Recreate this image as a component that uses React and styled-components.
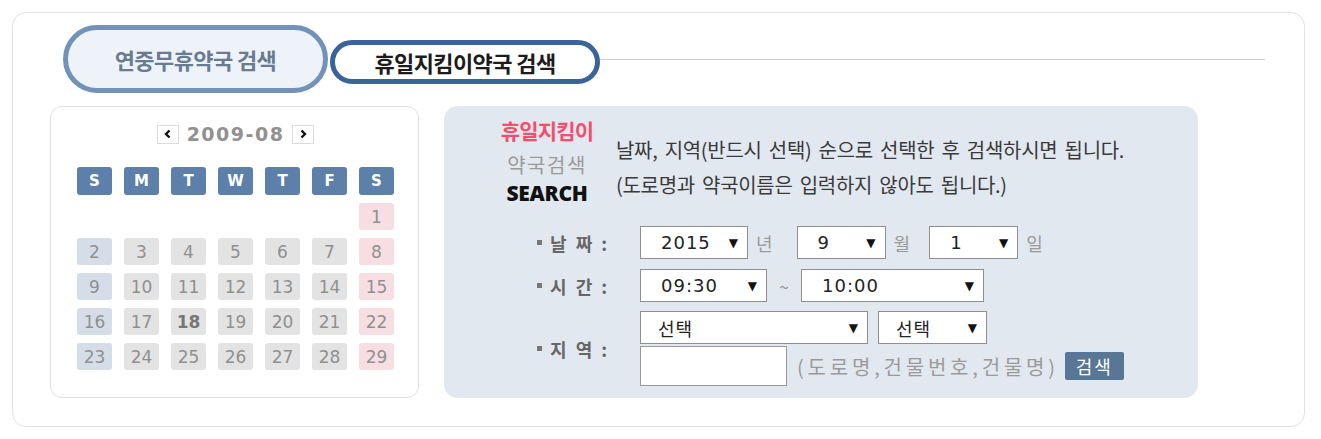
import styled, { createGlobalStyle } from 'styled-components';

const GlobalStyle = createGlobalStyle`
	body {
		margin: 0;
		background: #fff;
		font-family: "Noto Sans CJK KR", sans-serif;
	}
`;

const Card = styled.div`
	box-sizing: border-box;
	width: 1293px;
	height: 415px;
	margin: 12px 0 0 12px;
	padding: 12px 0 0 37px;
	border: 1px solid #dfe2e6;
	border-radius: 14px;
`;

const TabsRow = styled.div`
	display: flex;
	align-items: center;
	height: 68px;
	margin: 0 39px 0 13px;
`;

const Tab = styled.div`
	box-sizing: border-box;
	display: flex;
	align-items: center;
	justify-content: center;
	width: ${({ $active }) => ($active ? '270px' : '265px')};
	height: ${({ $active }) => ($active ? '44px' : '68px')};
	margin-top: ${({ $active }) => ($active ? '6px' : '0')};
	margin-left: ${({ $active }) => ($active ? '2px' : '0')};
	border: 5px solid ${({ $active }) => ($active ? '#3a6499' : '#7292b9')};
	border-radius: 34px;
	background: ${({ $active }) => ($active ? '#fff' : '#eef3f9')};
	color: ${({ $active }) => ($active ? '#1c1c1c' : '#687b92')};
	font-size: 22px;
	font-weight: ${({ $active }) => ($active ? 700 : 600)};
	letter-spacing: -0.6px;
`;

const TabLine = styled.div`
	flex: 1;
	height: 1px;
	background: #c9cdd4;
`;

const Body = styled.div`
	display: flex;
	gap: 25px;
	margin-top: 13px;
`;

const Calendar = styled.div`
	box-sizing: border-box;
	width: 369px;
	height: 292px;
	padding: 17px 0 0 26px;
	border: 1px solid #dde2e8;
	border-radius: 12px;
`;

const MonthNav = styled.div`
	display: flex;
	align-items: center;
	justify-content: center;
	gap: 8px;
	width: 317px;
	height: 20px;
	margin-bottom: 23px;
`;

const NavBtn = styled.div`
	box-sizing: border-box;
	display: flex;
	align-items: center;
	justify-content: center;
	width: 22px;
	height: 19px;
	border: 1px solid #dcdcdc;
	background: #fff;
`;

const MonthText = styled.span`
	font-family: "DejaVu Sans", sans-serif;
	font-size: 19px;
	font-weight: bold;
	letter-spacing: 1.5px;
	color: #919191;
`;

const Grid = styled.div`
	display: grid;
	grid-template-columns: repeat(7, 35px);
	grid-template-rows: 28px;
	grid-auto-rows: 27px;
	column-gap: 12px;
	row-gap: 8px;
`;

const DayHead = styled.div`
	display: flex;
	align-items: center;
	justify-content: center;
	border-radius: 3px;
	background: #5d80aa;
	color: #fff;
	font-family: "DejaVu Sans", sans-serif;
	font-size: 15px;
	font-weight: bold;
`;

const cellColors = { sun: '#d5dde9', sat: '#f6dee3', week: '#e3e3e3' };

const DateCell = styled.div`
	display: flex;
	align-items: center;
	justify-content: center;
	border-radius: 3px;
	background: ${({ $kind }) => cellColors[$kind]};
	color: ${({ $bold }) => ($bold ? '#777' : '#909090')};
	font-family: "DejaVu Sans", sans-serif;
	font-size: 17px;
	font-weight: ${({ $bold }) => ($bold ? 'bold' : 'normal')};
`;

const Panel = styled.div`
	box-sizing: border-box;
	width: 754px;
	height: 292px;
	padding: 9px 0 0 53px;
	border-radius: 14px;
	background: #e2e8f0;
`;

const Intro = styled.div`
	display: flex;
	gap: 19px;
`;

const Badge = styled.div`
	display: flex;
	flex-direction: column;
	align-items: center;
	width: 100px;
`;

const BadgeRed = styled.div`
	line-height: 30px;
	font-size: 21px;
	font-weight: 700;
	letter-spacing: -0.8px;
	color: #f24f6c;
`;

const BadgeGray = styled.div`
	margin-top: 5px;
	line-height: 30px;
	font-size: 20px;
	letter-spacing: 1.5px;
	color: #9a9a9a;
`;

const BadgeEn = styled.div`
	line-height: 26px;
	font-family: "Open Sans", sans-serif;
	font-size: 21px;
	font-weight: 800;
	letter-spacing: -0.3px;
	color: #111;
`;

const Desc = styled.div`
	margin-top: 17px;
	line-height: 35px;
	font-size: 20px;
	letter-spacing: -0.3px;
	word-spacing: 3px;
	color: #3a3a3a;
`;

const Form = styled.div`
	display: flex;
	flex-direction: column;
	margin: 20px 0 0 40px;
`;

const Row = styled.div`
	display: flex;
	align-items: center;
	margin-top: ${({ $gap }) => $gap || 0}px;
`;

const Label = styled.div`
	display: flex;
	align-items: center;
	width: 103px;
	flex-shrink: 0;
	font-size: 18px;
	font-weight: 700;
	letter-spacing: 2.5px;
	color: #666;
	&::before {
		content: '';
		width: 5px;
		height: 5px;
		margin-right: 8px;
		background: #777;
	}
`;

const Select = styled.div`
	box-sizing: border-box;
	display: flex;
	align-items: center;
	justify-content: space-between;
	width: ${({ $w }) => $w}px;
	height: 33px;
	padding: 0 8px 0 ${({ $pl }) => $pl || 20}px;
	border: 1px solid #8f8f8f;
	background: #fff;
	font-family: "DejaVu Sans", "Noto Sans CJK KR", sans-serif;
	font-size: 18px;
	letter-spacing: 1px;
	color: #222;
`;

const Arrow = styled.span`
	font-size: 12px;
	color: #111;
`;

const Unit = styled.span`
	margin: 0 ${({ $mr }) => $mr || 0}px 0 ${({ $ml }) => $ml || 8}px;
	font-size: 18px;
	color: #9a9a9a;
`;

const AreaGroup = styled.div`
	display: flex;
	flex-direction: column;
	gap: 2px;
`;

const TextInput = styled.div`
	box-sizing: border-box;
	width: 147px;
	height: 40px;
	border: 1px solid #999;
	background: #fff;
`;

const Hint = styled.span`
	margin-left: 10px;
	font-size: 20px;
	letter-spacing: 3.8px;
	color: #9a9a9a;
`;

const SearchBtn = styled.button`
	width: 59px;
	height: 28px;
	margin-left: 6px;
	padding: 0;
	border: none;
	border-radius: 2px;
	background: #587695;
	color: #fff;
	font-family: "Noto Sans CJK KR", sans-serif;
	font-size: 18px;
	letter-spacing: 2px;
`;

const Chevron = ({ dir }) => (
	<svg width="10" height="10" viewBox="0 0 10 10">
		<polyline
			points={dir === 'left' ? '6.5,1.5 3,5 6.5,8.5' : '3.5,1.5 7,5 3.5,8.5'}
			fill="none"
			stroke="#111"
			strokeWidth="2.4"
		/>
	</svg>
);

const days = ['S', 'M', 'T', 'W', 'T', 'F', 'S'];
const weeks = [
	[null, null, null, null, null, null, 1],
	[2, 3, 4, 5, 6, 7, 8],
	[9, 10, 11, 12, 13, 14, 15],
	[16, 17, 18, 19, 20, 21, 22],
	[23, 24, 25, 26, 27, 28, 29],
];

const kindOf = i => (i === 0 ? 'sun' : i === 6 ? 'sat' : 'week');

const Sel = ({ w, pl, children }) => (
	<Select $w={w} $pl={pl}>
		<span>{children}</span>
		<Arrow>▼</Arrow>
	</Select>
);

const App = () => {
	return (
		<>
			<GlobalStyle />
			<Card>
				<TabsRow>
					<Tab>연중무휴약국 검색</Tab>
					<Tab $active>휴일지킴이약국 검색</Tab>
					<TabLine />
				</TabsRow>
				<Body>
					<Calendar>
						<MonthNav>
							<NavBtn><Chevron dir="left" /></NavBtn>
							<MonthText>2009-08</MonthText>
							<NavBtn><Chevron dir="right" /></NavBtn>
						</MonthNav>
						<Grid>
							{days.map((d, i) => (
								<DayHead key={'h' + i}>{d}</DayHead>
							))}
							{weeks.map((week, wi) =>
								week.map((n, i) =>
									n ? (
										<DateCell key={wi + '-' + i} $kind={kindOf(i)} $bold={n === 18}>
											{n}
										</DateCell>
									) : (
										<div key={wi + '-' + i} />
									)
								)
							)}
						</Grid>
					</Calendar>
					<Panel>
						<Intro>
							<Badge>
								<BadgeRed>휴일지킴이</BadgeRed>
								<BadgeGray>약국검색</BadgeGray>
								<BadgeEn>SEARCH</BadgeEn>
							</Badge>
							<Desc>
								날짜, 지역(반드시 선택) 순으로 선택한 후 검색하시면 됩니다.
								<br />
								(도로명과 약국이름은 입력하지 않아도 됩니다.)
							</Desc>
						</Intro>
						<Form>
							<Row>
								<Label>날 짜 :</Label>
								<Sel w={108}>2015</Sel>
								<Unit $mr={24}>년</Unit>
								<Sel w={89}>9</Sel>
								<Unit $mr={19}>월</Unit>
								<Sel w={89}>1</Sel>
								<Unit>일</Unit>
							</Row>
							<Row $gap={10}>
								<Label>시 간 :</Label>
								<Sel w={127}>09:30</Sel>
								<Unit $ml={12} $mr={12}>~</Unit>
								<Sel w={183}>10:00</Sel>
							</Row>
							<Row $gap={9}>
								<Label>지 역 :</Label>
								<AreaGroup>
									<Row>
										<Sel w={228} pl={17}>선택</Sel>
										<Unit $ml={10} />
										<Sel w={109} pl={17}>선택</Sel>
									</Row>
									<Row>
										<TextInput />
										<Hint>(도로명,건물번호,건물명)</Hint>
										<SearchBtn>검색</SearchBtn>
									</Row>
								</AreaGroup>
							</Row>
						</Form>
					</Panel>
				</Body>
			</Card>
		</>
	);
};

export default App;
